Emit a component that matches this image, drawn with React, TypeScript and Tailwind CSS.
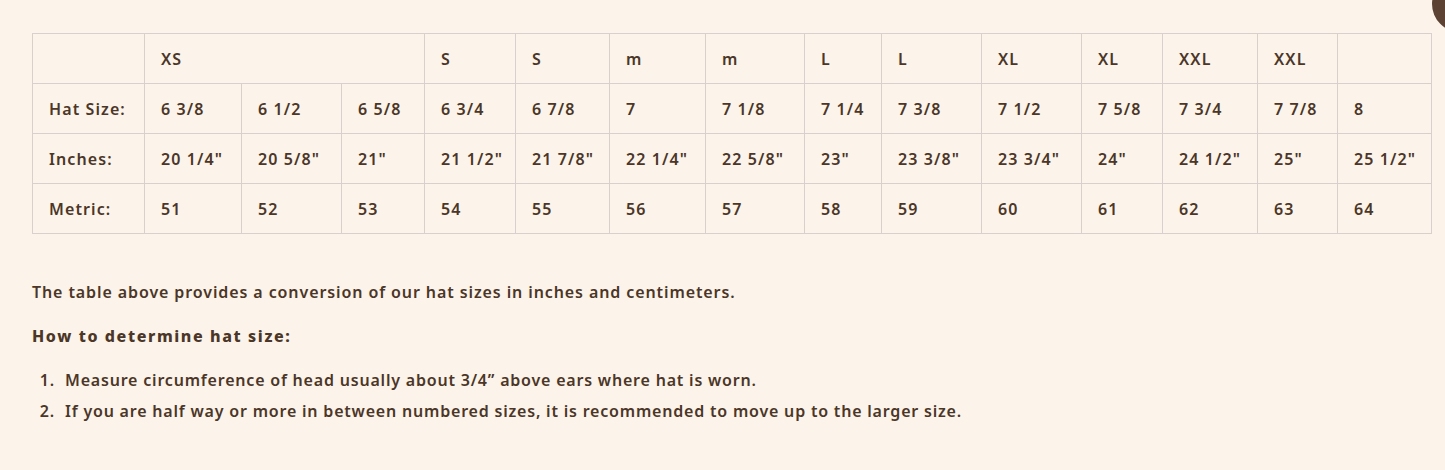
const font = { fontFamily: '"Noto Sans", "DejaVu Sans", sans-serif' };

const widths = [112, 97, 100, 83, 91, 94, 96, 99, 77, 100, 100, 81, 95, 80, 94];

const headers = ['S', 'S', 'm', 'm', 'L', 'L', 'XL', 'XL', 'XXL', 'XXL', ''];

const rows = [
  {
    label: 'Hat Size:',
    values: ['6 3/8', '6 1/2', '6 5/8', '6 3/4', '6 7/8', '7', '7 1/8', '7 1/4', '7 3/8', '7 1/2', '7 5/8', '7 3/4', '7 7/8', '8'],
  },
  {
    label: 'Inches:',
    values: ['20 1/4"', '20 5/8"', '21"', '21 1/2"', '21 7/8"', '22 1/4"', '22 5/8"', '23"', '23 3/8"', '23 3/4"', '24"', '24 1/2"', '25"', '25 1/2"'],
  },
  {
    label: 'Metric:',
    values: ['51', '52', '53', '54', '55', '56', '57', '58', '59', '60', '61', '62', '63', '64'],
  },
];

const cell = 'h-[50px] whitespace-nowrap border border-[#d9cfcc] px-[16px] align-middle text-left';

export default function App() {
  return (
    <div
      className="relative h-[470px] w-full overflow-hidden bg-[#fcf4ea] text-[16px] font-semibold text-[#4b3628]"
      style={font}
    >
      <div className="absolute left-[1432px] top-[-24px] size-[56px] rounded-full bg-[#5b4232]" />

      <div className="px-[32px] pt-[33px]">
        <table className="w-[1399px] table-fixed border-collapse tracking-[1.1px]">
          <colgroup>
            {widths.map((w, i) => (
              <col key={i} style={{ width: w }} />
            ))}
          </colgroup>
          <tbody>
            <tr>
              <td className={cell}></td>
              <td className={cell} colSpan={3}>XS</td>
              {headers.map((h, i) => (
                <td key={i} className={cell}>{h}</td>
              ))}
            </tr>
            {rows.map((row) => (
              <tr key={row.label}>
                <td className={cell}>{row.label}</td>
                {row.values.map((v, i) => (
                  <td key={i} className={cell}>{v}</td>
                ))}
              </tr>
            ))}
          </tbody>
        </table>

        <p className="mt-[46px] leading-[24px] tracking-[0.9px]">
          The table above provides a conversion of our hat sizes in inches and centimeters.
        </p>

        <h3 className="mt-[20px] font-extrabold leading-[24px] tracking-[1.6px]">How to determine hat size:</h3>

        <ol className="mt-[20px] list-decimal pl-[28px] leading-[24px] tracking-[0.8px]">
          <li className="pl-[5px]">Measure circumference of head usually about 3/4” above ears where hat is worn.</li>
          <li className="mt-[7px] pl-[5px]">
            If you are half way or more in between numbered sizes, it is recommended to move up to the larger size.
          </li>
        </ol>
      </div>
    </div>
  );
}
